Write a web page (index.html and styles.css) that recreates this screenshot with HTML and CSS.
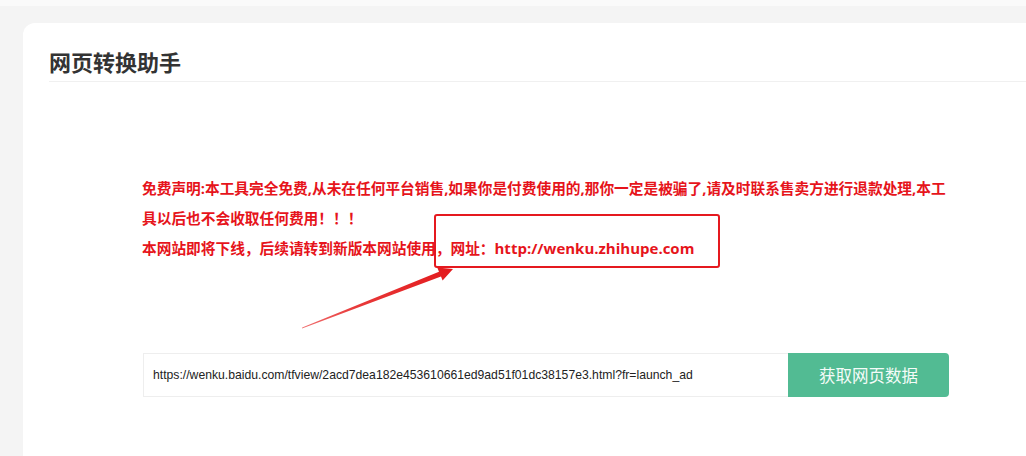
FILE: index.html
```html
<!DOCTYPE html>
<html lang="zh-CN">
<head>
<meta charset="utf-8">
<title>网页转换助手</title>
<link rel="stylesheet" href="styles.css">
</head>
<body>
<div class="topbar"></div>
<div class="page">
  <div class="card">
    <div class="card-header">
      <h1 class="title">网页转换助手</h1>
    </div>
    <div class="card-body">
      <p class="notice">免费声明:本工具完全免费,从未在任何平台销售,如果你是付费使用的,那你一定是被骗了,请及时联系售卖方进行退款处理,本工<br>具以后也不会收取任何费用！！！<br>本网站即将下线，后续请转到新版本网站使用，网址：<span class="site">http://wenku.zhihupe.com</span></p>
      <form class="fetch-form" onsubmit="return false">
        <input class="url-input" type="text" value="https://wenku.baidu.com/tfview/2acd7dea182e453610661ed9ad51f01dc38157e3.html?fr=launch_ad">
        <button class="fetch-btn" type="submit">获取网页数据</button>
      </form>
    </div>
    <div class="mark-box"></div>
    <svg class="mark-arrow" width="165" height="75" viewBox="0 0 165 75" aria-hidden="true">
      <defs>
        <linearGradient id="ag" x1="0" y1="1" x2="1" y2="0">
          <stop offset="0" stop-color="#f07070"/>
          <stop offset="0.35" stop-color="#e83a3a"/>
          <stop offset="1" stop-color="#e3191c"/>
        </linearGradient>
      </defs>
      <polygon fill="url(#ag)" points="7,68.4 7.2,67.6 144.0,11.8 142.2,7.6 158,9 147.6,20.6 146.0,16.4"/>
    </svg>
  </div>
</div>
</body>
</html>
```

FILE: styles.css
```css
* { box-sizing: border-box; }

html, body {
  margin: 0;
  padding: 0;
}

body {
  background: #f4f4f4;
  overflow: hidden;
  width: 1026px;
  height: 456px;
  font-family: "Open Sans", "Noto Sans CJK SC", sans-serif;
}

.topbar {
  height: 6px;
  background: #fafafa;
}

.page {
  padding: 17px 0 0 23px;
}

.card {
  position: relative;
  background: #ffffff;
  border-radius: 12px 0 0 0;
  margin-right: -40px;
  height: 433px;
}

.card-header {
  margin-left: 26px;
  padding-top: 23px;
  padding-bottom: 5px;
  border-bottom: 1px solid #f0f0f0;
}

.title {
  margin: 0;
  font-family: "Noto Sans CJK SC", sans-serif;
  font-size: 22px;
  line-height: 30px;
  font-weight: 700;
  color: #333333;
}

.card-body {
  padding: 91px 0 0 119px;
}

.notice {
  margin: 0;
  width: 820px;
  font-size: 14.7px;
  line-height: 30px;
  font-weight: 700;
  color: #e6141b;
  white-space: nowrap;
}

.site {
  font-family: "Open Sans", sans-serif;
  font-size: 15px;
}

.fetch-form {
  display: flex;
  width: 806px;
  margin: 90px 0 0 1px;
}

.url-input {
  flex: 1;
  height: 44px;
  border: 1px solid #eeeeee;
  border-right: none;
  padding: 0 9px;
  font-family: "Liberation Sans", Arial, sans-serif;
  font-size: 12.2px;
  color: #222222;
  background: #ffffff;
  outline: none;
}

.fetch-btn {
  width: 161px;
  height: 44px;
  border: none;
  border-radius: 0 4px 4px 0;
  background: #52bb93;
  color: #f4fbf8;
  font-family: "Noto Sans CJK SC", sans-serif;
  font-size: 16.5px;
  cursor: pointer;
}

.mark-box {
  position: absolute;
  left: 411px;
  top: 191px;
  width: 286px;
  height: 54px;
  border: 2px solid #e5191f;
  border-radius: 3px;
}

.mark-arrow {
  position: absolute;
  left: 272px;
  top: 237px;
}
```
